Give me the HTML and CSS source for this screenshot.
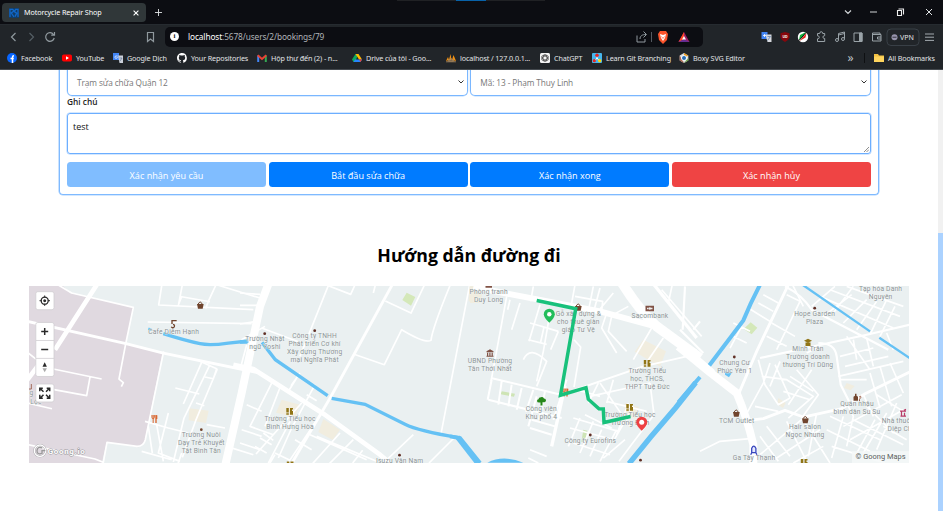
FILE: index.html
```html
<!DOCTYPE html>
<html lang="vi">
<head>
<meta charset="utf-8">
<title>Motorcycle Repair Shop</title>
<link rel="stylesheet" href="styles.css">
</head>
<body>
<header class="browser">
  <div class="tabstrip">
    <div class="tab">
      <svg class="tab-icon" viewBox="0 0 30 30"><path d="M0 0h30v30H0z" fill="#123d68"/><path d="M3 2v25M3 4h8l4 5-8 6 8 12M27 2v25M27 4h-7l-4 7 7 5-5 10" fill="none" stroke="#1267c8" stroke-width="4"/></svg>
      <span class="tab-title">Motorcycle Repair Shop</span>
      <svg class="tab-close" viewBox="0 0 10 10"><path d="M1 1l8 8M9 1L1 9" stroke="#fff" stroke-width="1.8"/></svg>
    </div>
    <svg class="new-tab" viewBox="0 0 10 10"><path d="M5 0v10M0 5h10" stroke="#dfe2e4" stroke-width="1.3"/></svg>
    <div class="top-handle"><i></i></div>
    <svg class="window-controls" viewBox="0 0 90 12"><path d="M1 4.500l3 3 3-3M26 6h7" fill="none" stroke="#cfd3d6" stroke-width="1.2"/><path d="M53.500 4.500h4v5h-4zM54.500 3h5v5.500" fill="none" stroke="#eee" stroke-width="1.1"/><path d="M82 3l6 6M88 3l-6 6" stroke="#dfe2e4"/></svg>
  </div>
  <div class="toolbar">
    <svg class="nav-icons" viewBox="0 0 160 24"><g fill="none" stroke="#90999e" stroke-width="1.2"><path d="M15.500 8l-4 4 4 4"/><path d="M29.500 8l4 4-4 4" stroke="#555f65"/><path d="M53.500 9.500a4.300 4.300 0 1 0 .7 3.500M54.500 7v3.200h-3.300"/><path d="M147.500 7.500h6v9l-3-2.500-3 2.500z"/></g></svg>
    <div class="address">
      <span class="site-info">i</span>
      <span class="url"><b>localhost</b>:5678/users/2/bookings/79</span>
      <svg class="address-icons" viewBox="0 0 56 16"><path d="M-2 6.500v6.500h8v-3M1 10c0-3 2-4.500 6-4.500M4.500 2.500l3 3-3 3" fill="none" stroke="#90999e"/><path d="M12.500 3v10" stroke="#535960"/><g transform="translate(-4)"><path d="M25 2h6l2 3-1 6-4 4-4-4-1-6z" fill="#fb542b"/><path d="M25 5l3 1 3-1-1 4-2 3-2-3z" fill="#fff"/><path d="M26.500 7.500l1.500 2 1.500-2" stroke="#fb542b" fill="none" stroke-width=".7"/><path d="M49 3l-5.500 10h11z" fill="#9e1f63"/><path d="M49 3l-5.500 10 5.500-3z" fill="#ff4724"/><path d="M43.500 13h11L49 10z" fill="#662d91"/><path d="M49 7l-2 3.600h4z" fill="#fff"/></g></svg>
    </div>
    <svg class="extensions" viewBox="760 0 183 24">
      <path d="M761.500 7h6v7h-6z" fill="#4285f4"/><path d="M765.500 9.500h6v7.500h-4z" fill="#d7d9de"/><path d="M763 10.500h3M764.500 9v3" stroke="#fff" stroke-width=".8"/><path d="M767.500 11.500h3l-3 4" stroke="#5578a9" stroke-width=".7" fill="none"/>
      <path d="M785 7l4.500 1.200v4.300q-1 3-4.500 4.500-3.500-1.500-4.500-4.500V8.200z" fill="#86070c"/><text class="ublock" x="785" y="13.200">UD</text>
      <circle cx="803" cy="12" r="5.200" fill="#fff"/><path d="M799 15l1-5 6-3-3 5z" fill="#11b53b"/><path d="M799.500 16l7-8-1 4.500z" fill="#e62117"/><path d="M799 15.500l7-8" stroke="#111"/>
      <g fill="none" stroke="#9aa3a8"><path d="M817.500 8.500h2.200q0-1.800 1.500-1.800t1.500 1.800h2v2.200q-1.800 0-1.800 1.400t1.800 1.400v3h-7.200v-2.700q1.800 0 1.800-1.500t-1.800-1.500z"/><path d="M838.500 15V8.500l6-1.500v6.800M838.500 10l6-1.500"/><circle cx="837" cy="15" r="1.500"/><circle cx="843" cy="14" r="1.500"/><path d="M854 8h8v8.500h-8z"/><path d="M859.500 8h2.500v8.500h-2.500z" fill="#9aa3a8"/><path d="M880 9.500V8h-7.500v8h8.500V9.500h-8.500M881 12h-3.500v2h3.500"/><rect x="887" y="4" width="32" height="16.500" rx="4" stroke="#394047"/><path d="M925 9h9M925 12.200h9M925 15.400h9" stroke="#a4abb0"/></g>
      <circle cx="894.500" cy="12.200" r="3" fill="#9895ad"/><path d="M892.500 12.200h4" stroke="#32313d"/><text class="vpn" x="900" y="15" textLength="14" lengthAdjust="spacingAndGlyphs">VPN</text>
    </svg>
  </div>
  <nav class="bookmarks">
    <a class="bm w-facebook"><svg viewBox="0 0 10 10"><circle cx="5" cy="5" r="5" fill="#0866ff"/><path d="M5.500 10V4q0-1.300 1.500-1.300M3.500 5.500h3.300" stroke="#fff" stroke-width="1.500" fill="none"/></svg><span>Facebook</span></a>
    <a class="bm w-youtube"><svg viewBox="0 0 10 10"><rect y="1.500" width="10" height="7" rx="1.700" fill="#f00"/><path d="M4 3.300v3.400L7 5z" fill="#fff"/></svg><span>YouTube</span></a>
    <a class="bm w-dich"><svg viewBox="0 0 10 10"><path d="M0 0h6v7H0z" fill="#4285f4"/><path d="M5 2.500h5V10H6.500z" fill="#cbd0da"/><path d="M4.700 3H3a1.200 1.200 0 1 0 1.300 1" stroke="#fff" stroke-width=".7" fill="none"/><path d="M6.500 5h2.500l-2 3" stroke="#637795" stroke-width=".7" fill="none"/></svg><span>Google Dịch</span></a>
    <a class="bm w-repos"><svg viewBox="0 0 16 16"><path fill="#fff" d="M8 0C3.600 0 0 3.600 0 8c0 3.500 2.300 6.500 5.500 7.600.4.100.5-.2.500-.4v-1.400c-2.200.500-2.700-1-2.700-1-.4-.9-.9-1.200-.9-1.200-.7-.5.100-.5.100-.5.800.1 1.200.8 1.200.8.700 1.200 1.900.9 2.300.7.100-.5.300-.9.500-1.100-1.800-.2-3.600-.9-3.600-4 0-.9.300-1.600.8-2.100-.1-.2-.4-1 .1-2.100 0 0 .7-.2 2.200.8a7.500 7.500 0 0 1 4 0c1.500-1 2.200-.8 2.200-.8.400 1.100.2 1.900.1 2.100.5.600.8 1.300.8 2.100 0 3.100-1.900 3.700-3.700 3.900.3.300.6.800.6 1.500v2.200c0 .2.100.5.500.4A8 8 0 0 0 8 0z"/></svg><span>Your Repositories</span></a>
    <a class="bm w-mail"><svg viewBox="0 0 10 10"><path d="M1.200 9V2.500" stroke="#4285f4" stroke-width="2"/><path d="M8.800 9V2.500" stroke="#34a853" stroke-width="2"/><path d="M.7 2.300L5 6l4.300-3.700" fill="none" stroke="#ea4335" stroke-width="2"/></svg><span>Hộp thư đến (2) - n...</span></a>
    <a class="bm w-drive"><svg viewBox="0 0 10 10"><path d="M3.500 1h3L3 9H1.500L0 6.500z" fill="#0da960"/><path d="M3.500 1h3L10 6.500H7z" fill="#ffba00"/><path d="M3 6.500h7L8.500 9h-7z" fill="#2684fc"/><path d="M7 6.500h3L8.500 9z" fill="#ea4335"/></svg><span>Drive của tôi - Goo...</span></a>
    <a class="bm w-local"><svg viewBox="0 0 10 10"><path d="M0 8l2-4 1 3zM3 7l1.500-6 1 6zM6 7l1.500-5L10 8z" fill="#f29111"/><path d="M0 8.800h10M2 9l1-3 1 3 1-4 1 4 1-3 1 3" stroke="#a8885d" fill="none" stroke-width=".8"/></svg><span>localhost / 127.0.0.1...</span></a>
    <a class="bm w-gpt"><svg viewBox="0 0 10 10"><rect width="10" height="10" rx="1.500" fill="#f4f4f4"/><g fill="none" stroke="#333" stroke-width=".6"><ellipse cx="5" cy="5" rx="2" ry="3.700"/><ellipse cx="5" cy="5" rx="2" ry="3.700" transform="rotate(60 5 5)"/><ellipse cx="5" cy="5" rx="2" ry="3.700" transform="rotate(120 5 5)"/></g></svg><span>ChatGPT</span></a>
    <a class="bm w-git"><svg viewBox="0 0 10 10"><rect width="10" height="10" rx="1" fill="#46b5ec"/><path d="M5 2v3L2.500 8M5 5l2.500 3" stroke="#fff" fill="none"/><circle cx="5" cy="2.200" r="1.700" fill="#e62222"/><circle cx="2.300" cy="7.700" r="1.600" fill="#e62222"/><circle cx="7.700" cy="7.700" r="1.600" fill="#ffd500"/></svg><span>Learn Git Branching</span></a>
    <a class="bm w-boxy"><svg viewBox="0 0 10 10"><path d="M5 0l4.300 2.500v5L5 10 .7 7.500v-5z" fill="#d8dce0"/><path d="M5 0l4.300 2.500L5 5z" fill="#e89b20"/><path d="M5 10l4.300-2.500V5z" fill="#6ca344"/><path d="M.7 2.500v5L5 10z" fill="#ad6750"/><circle cx="5" cy="5" r="2.800" fill="#fff"/><circle cx="5" cy="5" r="2" fill="#246cb4"/></svg><span>Boxy SVG Editor</span></a>
    <span class="more">»</span>
    <a class="bm all"><svg viewBox="0 0 10 10"><path d="M0 1h4l1 1.500h5V9H0z" fill="#f2c143"/><path d="M0 3.500h10V9H0z" fill="#ffd55e"/></svg><span>All Bookmarks</span></a>
  </nav>
</header>

<div class="viewport">
  <main class="page">
    <form class="card">
      <div class="row two">
        <div class="select"><span>Trạm sửa chữa Quận 12</span><svg viewBox="0 0 6 4"><path d="M.5.500L3 3 5.500.500"/></svg></div>
        <div class="select"><span>Mã: 13 - Phạm Thuy Linh</span><svg viewBox="0 0 6 4"><path d="M.5.500L3 3 5.500.500"/></svg></div>
      </div>
      <label class="label">Ghi chú</label>
      <div class="note"><span>test</span><svg viewBox="0 0 6 6"><path d="M0 6l6-6M3 6l3-3"/></svg></div>
      <div class="row four">
        <button type="button" class="btn muted">Xác nhận yêu cầu</button>
        <button type="button" class="btn">Bắt đầu sửa chữa</button>
        <button type="button" class="btn">Xác nhận xong</button>
        <button type="button" class="btn danger">Xác nhận hủy</button>
      </div>
    </form>
    <h1 class="title">Hướng dẫn đường đi</h1>
    <svg class="map" viewBox="29 286.300 880 176.400" preserveAspectRatio="none">
      <rect x="29" y="286" width="880" height="178" fill="#eaf0f1"/>

      <!-- west -->
      <g transform="translate(20 280) scale(.33333)">
        <path d="M0 0H110L150 40 340 82 318 190 427 220 373 490 355 503 260 488 243 560H0z" fill="#e0d9e0"/>
        <path d="M508 386l58 7-8 37-52-8z" fill="#f1eddf"/>
        <g class="road">
          <path class="w4" d="M105 10l50 30 185 43-23 110-20 105 13 11-6 12M0 490l225 48 25 10 11-60 90 12q20 0 25-20l55-265"/>
          <path class="w8" d="M0 120l318 72 112 28 290 60"/>
          <path class="w12" d="M240 0L105 210M60 250L0 330"/>
          <path class="w4" d="M100 268l145 30M102 330l98 18 10-56M0 365l96 22M0 200l50 40"/>
          <path class="w20" d="M750 0l-30 80-55 260-50 220"/>
          <path class="w4" d="M428 0l-12 76 284 14M490 0l-15 78M595 0l-30 65-8 22M383 127l312 5M475 76l10-25 85 15M590 15l80 25 50 15M680 195l-20 75M735 140l-70 40"/>
          <path class="w4" d="M545 248l-55 125M570 255l-78 160-32 132M592 268l-65 155-40 110M540 245l50 22-10 30-25-5M466 325l72 18M528 370l25 8M375 425l70 20 60 15M385 440l12 80M410 435l20 110M445 400l-30 120 65 25M365 515l90 25M560 435l55 10M680 375l45 20M665 450l60 20M660 490l60 20M620 500l80 25M485 520l-12 35"/>
        </g>
        <path class="water w10" d="M430 162Q500 184 540 192 570 198 625 190L685 184"/><path class="water" d="M385 147l10 4" stroke-width="7"/>
      </g>

      <!-- centre west -->
      <g transform="translate(240 280) scale(.33333)">
        <path d="M500 39l26 13-13 26-26-17z" fill="#d4e8b9"/><path d="M125 360l55 15-15 38-57-14zM250 418l50 32-22 31-43-24zM690 20h35v50h-35z" fill="#f1eddf"/>
        <g class="road">
          <path class="w14" d="M-20 255L40 268 250 402 420 525 450 550"/>
          <path class="w8" d="M465 0L272 352 150 560"/>
          <path class="w4" d="M268 10L180 230M265 18l67 26 20-44M410 0l-10 40M436 64l77 36 48-100M340 223l93 32 52-105q70 42 88 32 4-36 60-172M690 10L602 468M642 475l-75 75M520 465l-90 85M65 145l120 45M0 77h60M0 133l45-7M0 40l60 4M95 310L30 440l70 25M122 318L75 440M170 295l-28 45M180 280l-27 38M225 315l-70 130-40 90M200 345l30 18M185 370L48 523M245 400l-100 148M150 425l-65 125M230 470l180 75M210 465l170 75M300 460L215 555M340 480L265 555M368 512l-30 38M70 460l30 22M60 475l35 20M45 500l35 20M165 480l50 30M105 520l45 22M90 550l15-25"/>
        </g>
        <path class="water w10" d="M0 187H22M66 188l40 52 157 108M275 356l100 18 120 60q40 20 160 40"/><path class="water" d="M652 472l60 77" stroke-width="15"/>
      </g>

      <!-- centre east -->
      <g transform="translate(450 280) scale(.33333)">
        <path d="M58 20l20 3-7 45-15-3zM580 180l68 35-18 46-76-45zM525 370l42 12-10 35-36-10z" fill="#f1eddf"/><path d="M155 335l40 7-3 9-40-7zM400 450l12 3-8 35-10-2z" fill="#cee4b5"/>
        <g class="road">
          <path class="w18" d="M70 22L450 95 605 137"/>
          <path class="w28" d="M510 0Q565 90 620 140L750 235"/>
          <path class="w10" d="M600 0L740 175M345 318L305 500"/>
          <path class="w4" d="M170 50L123 305M180 60l-7 30M210 70l-25 80M250 20l-8 45M270 75l-33 110M240 130l42 12-10 45M275 140l50 15M325 155l-23 55M235 180l55 14M300 100l-20 115-20 90M365 70l10-55M430 20l-15 75M450 25l-20 75M375 50l83 15-3 30M372 180l20 22-20 120M470 100l-15 45 45 75M485 110l-10 45 55 60M490 40l-40 48M535 80l-55 30M605 145L550 240M640 175l-55 80"/>
          <path class="w5" d="M123 295l210 50L580 260l130-30 30-20M115 360l220 55M125 300l-12 60M155 305l-10 70M185 315l-10 65M215 325l-15 65M250 330l-22 66M285 335l-18 85M245 420l70 20M240 445l65 20M260 350l-25 90M350 300l-40 120"/>
          <path class="w4" d="M445 310l-30 60M450 310l90 130M490 300l-20 70M420 350l180-40M600 310l12 95-105 140M380 330l70 20M405 405l80 40M370 415l135 40M360 445l120 32M370 490l110 35M390 415l-35 85M430 425l-40 95M455 450l-35 80M500 450l-50 95M525 480l-65 55M535 370l-35 95M550 380l-60 105M470 365l120 30M220 240q20-45 70 5l-30 75M240 510l50 20M235 535l30 15M635 30l120 140M670 0l-15 70"/>
        </g>
        <path class="water" d="M537 552l65-80 75-88 60-75" stroke-width="16"/><path class="water" d="M0 470l30 5 60 75" stroke-width="12"/><path d="M112 549q48-25 108 0z" fill="#65c1f4"/>
      </g>

      <!-- east -->
      <g transform="translate(680 280) scale(.33333)">
        <path d="M212 128l20 16-17 20-24-16z" fill="#d4e8b9"/><path d="M500 310l24 9-12 13-20-7zM295 355l22 15-8 15-18-12z" fill="#f1eddf"/><path d="M135 275l20 5-8 13-12-8z" fill="#65c1f4"/>
        <g class="road">
          <path class="w20" d="M-5 200L90 278 170 340Q200 410 220 495V555"/>
          <path class="w8" d="M325 15L230 215 175 345M205 422l45-5 65-25 55 20 115-25 70-45 140-68"/>
          <path class="w6" d="M240 235l320-70 130-30M415 190q50 0 55 40l12 85 25 50M15 20L8 150M0 150l70 70M40 150l20-25M315 20q50 25 80 70l230 120"/>
          <path class="w4" d="M60 515l60-30 90-8M205 85l65 40M160 130l50 25M150 165l50 25M185 140l-35 65M235 70l45 25M250 45l45 25M320 45l40 20-70 145M275 130l70 40M260 170l60 30M235 240l20 75 40 60 35-20-45-100M245 290l75 10 80 50-75 65M270 250l-20 60M300 245l-30 75M225 380l70 15M250 310l-60 110M330 290l70 45M350 270l65 75-50 70M395 270l-70 105M310 335l80 25M370 80L330 0M460 100l60-80M395 80l70-60M430 110l85-65M490 130l70-70M530 150l60-85M570 165l50-105M600 170l45-90M420 50l220 95M450 30l210 80M500 20l170 60M520 180l10 60M560 175l20 85M620 160l20 50M480 230l100-25M495 260l130-30M475 290l195-45M570 280l30 105M600 260l35 120M630 250l40 90M500 370l20 40-20 90M550 345l30 65M490 440l175-95M510 480l160-90M450 410l150 70M440 450l130 65M370 415l-130 110M320 425l60 120M375 430l75 120M420 450l-130 85M260 440l70 90M240 470l55 75M430 500l-90 50M490 410l-35 125M585 420l-60 110M620 400l-70 120M650 370l-60 140M455 500l160 50M480 300l80 0M500 170l70 100M380 220l40-20M590 345l80 50M560 380l80 80M610 440l70 40M520 420l150 75M410 400l-25 130"/>
        </g>
        <path class="water" d="M-5 368L60 292M82 265L190 122 212 72 240 15" stroke-width="12"/><path class="water" d="M360 10l210 145M598 174l92 62" stroke-width="7"/>
        <path class="road w20" d="M45 236l52 45"/>
      </g>

      <g transform="translate(20 280) scale(.33333)" class="labels"><text x="461" y="162">Cafe Diễm Hạnh</text><text x="45" y="346">g N</text><text x="48" y="372">Lộc</text><text x="544" y="473">Trường Nuôi<tspan x="544" dy="24">Dạy Trẻ Khuyết</tspan><tspan x="544" dy="24">Tật Bình Tân</tspan></text><text class="logo" x="139" y="522" textLength="112">Goong.io</text><circle cx="60" cy="513" r="17" fill="none" stroke="#9b9a9e" stroke-width="6"/><circle cx="60" cy="513" r="17" fill="none" stroke="#fff" stroke-width="4"/><path d="M67 505q-14-7-16 8 0 13 15 8v-8h10" fill="none" stroke="#999" stroke-width="4"/></g>
      <g transform="translate(240 280) scale(.33333)" class="labels"><text x="75" y="185">Trường Nhật<tspan x="75" dy="24">ngữ Yoshi</tspan></text><text x="224" y="175">Công ty TNHH<tspan x="224" dy="24">Phát triển Cơ khí</tspan><tspan x="224" dy="24">Xây dựng Thương</tspan><tspan x="224" dy="24">mại Nghĩa Phát</tspan></text><text x="150" y="424">Trường Tiểu học<tspan x="150" dy="24">Bình Hưng Hòa</tspan></text><text x="479" y="550">Isuzu Vân Nam</text></g>
      <g transform="translate(450 280) scale(.33333)" class="labels"><text x="116" y="43">Phòng tranh<tspan x="116" dy="24">Duy Long</tspan></text><text x="120" y="249">UBND Phường<tspan x="120" dy="24">Tân Thới Nhất</tspan></text><text x="385" y="110">Gỗ xây dựng &amp;<tspan x="385" dy="24">cho thuê giàn</tspan><tspan x="385" dy="24">giáo Tư Vệ</tspan></text><text x="600" y="115">Sacombank</text><text x="592" y="280">Trường Tiểu<tspan x="592" dy="24">học, THCS,</tspan><tspan x="592" dy="24">THPT Tuệ Đức</tspan></text><text x="274" y="394">Công viên<tspan x="274" dy="24">Khu phố 4</tspan></text><text x="540" y="411">Trường Tiểu học<tspan x="540" dy="24">Trương Định</tspan></text><text x="421" y="489">Công ty Eurofins</text></g>
      <g transform="translate(680 280) scale(.33333)" class="labels"><text x="602" y="35">Tạp hóa Danh<tspan x="602" dy="24">Nguyên</tspan></text><text x="404" y="109">Hope Garden<tspan x="404" dy="24">Plaza</tspan></text><text x="384" y="215">Minh Trân<tspan x="384" dy="24">Trường doanh</tspan><tspan x="384" dy="24">thương Trí Dũng</tspan></text><text x="164" y="256">Chung Cư<tspan x="164" dy="24">Phúc Yên 1</tspan></text><text x="170" y="429">TCM Outlet</text><text x="375" y="448">Hair salon<tspan x="375" dy="24">Ngọc Nhung</tspan></text><text x="531" y="380">Quán nhậu<tspan x="531" dy="24">bình dân Su Su</tspan></text><text x="654" y="429">Nhà thuốc<tspan x="662" dy="24">Diệp Chi</tspan></text><text x="222" y="542">Ga Tây Thạnh</text></g>

      <!-- points of interest -->
      <g transform="translate(20 280) scale(.33333)">
        <g id="basket"><path d="M531 73h20l-3 14h-14z" fill="#70442d"/><path d="M534 74q7-14 13 0" fill="none" stroke="#70442d" stroke-width="3"/></g>
        <path d="M470 123h-14v10M459 134a5 5 0 1 1-5 7" fill="none" stroke="#70442d" stroke-width="4"/><path d="M34 313v15h-7" fill="none" stroke="#a46a59" stroke-width="3"/>
        <g id="food" fill="none" stroke="#d9662f"><path d="M396 406v7q0 4 3.500 4t3.500-4v-7M399.500 406v24" stroke-width="3"/><path d="M408 406v24M410 407v11" stroke-width="4"/></g>
        <circle cx="544" cy="450" r="4" fill="#70442d"/>
      </g>
      <g fill="#602f25"><circle cx="264.700" cy="334" r="1.400"/><circle cx="314.700" cy="331" r="1.400"/><circle cx="399.500" cy="455.500" r="1.400"/><circle cx="590.300" cy="435.300" r="1.400"/><circle cx="640.500" cy="460.500" r="1.400"/><circle cx="814.700" cy="308.500" r="1.400"/><circle cx="734.300" cy="357.300" r="1.400"/></g>
      <g id="school" fill="#917516"><path d="M286.300 408.300h2.500v4.500h-2.500zM286.300 413.500h2.500v1.500h-2.500zM290 408.300h3v1.500h-1v1.500h1v3.700h-3z"/></g>
      <use href="#school" x="357.500" y="-48"/><use href="#school" x="340" y="-4"/><use href="#school" x="0.500" y="53.500"/><use href="#school" x="514.500" y="51"/>
      <use href="#basket" transform="translate(398 282) scale(.33333)"/><use href="#basket" transform="translate(556 388) scale(.33333)"/><use href="#basket" transform="translate(625 394.500) scale(.33333)"/><use href="#food" transform="translate(431 253.500) scale(.33333)"/>
      <g fill="#815346"><path d="M486.500 351.500l3.500-2 3.500 2v1h-7zM487 353h1.200v3H487zM489.300 353h1.200v3h-1.200zM491.600 353h1.200v3h-1.200zM486.500 356h7v1h-7zM485.500 286h6.500v2h-6.500zM645.500 306h8.500v5.500h-8.500z"/></g><path d="M647 308.800h1.500m2.500 0h1.500" stroke="#eee" stroke-width="1.500"/><circle cx="649.800" cy="308.800" r="1.300" fill="#eee"/>
      <path d="M540.500 405.800v-3q-3.500.5-3.500-1.500 0-1.500 1.500-1.800 0-2 2.500-2 2-.5 3 1.300 2 .2 2 2 0 2-3.500 1.800v3.200z" fill="#26871a"/>
      <path d="M804 341l4-2 4 2-4 2zM805.500 342.700v3.500h5v-3.500" fill="#917516"/>
      <path d="M855 394h1.500v2l1.500 1v4h-4.500v-4l1.500-1z" fill="#70442d"/><path d="M859 397.500q2-2 2 0l-1.500 2v2" stroke="#9d634d" fill="none"/>
      <path d="M900 411.500h6M900.500 416.500h5.500M901.500 412v4M904.500 413v3M904 410.500l2-.8" fill="none" stroke="#b93d68" stroke-width="1.200"/>
      <path d="M751.700 453v-4.500q2-4 4.200 0v4.500zM751.700 453l-1 2m5.200-2l1 2" fill="#e5e9ff" stroke="#3947bd" stroke-width="1.300"/>

      <path d="M536.700 300.800l39 8.200-15.200 86.500 25.500-7.500 2.300 11.500 10.700 9.500 4.300.3.700 13.500 26.500-6" fill="none" stroke="#18c17b" stroke-width="3.500"/>
      <path d="M549.300 323q-5.500-5-5.500-8.500a5.500 5.500 0 0 1 11 0q0 3.500-5.500 8.500z" fill="#22bd5b"/><circle cx="549.300" cy="314.500" r="2.200" fill="#fff"/>
      <path d="M641.700 431q-5.500-5-5.500-8.500a5.500 5.500 0 0 1 11 0q0 3.500-5.500 8.500z" fill="#ee4042"/><circle cx="641.700" cy="422.500" r="2.500" fill="#fff"/>

      <g fill="#fff" stroke="#d0ced2" stroke-width=".8"><rect x="35.800" y="292" width="18.200" height="18" rx="2"/><rect x="35.800" y="322.800" width="18.200" height="54" rx="2"/><rect x="35.800" y="384.300" width="18.200" height="18" rx="2"/><path d="M36 340.800h18M36 358.700h18"/></g>
      <g fill="none" stroke="#292929"><circle cx="44.700" cy="301" r="3.500" stroke-width="1.300"/><path d="M44.700 295.800v2M44.700 304.200v2M39.500 301h2M48 301h2"/><circle cx="44.700" cy="301" r="1.500" fill="#292929" stroke="none"/><path d="M44.700 328.300v7M41.200 331.800h7M41.200 349.700h7" stroke-width="1.500"/><path d="M39.800 391.500v-3h3M46.700 388.500h3v3M39.800 395v3.500h3M46.700 398.500h3V395M40 388.500l3.500 3.500M49.500 388.500L46 392M40 398.500l3.500-3.500M49.500 398.500L46 395" stroke-width="1.500"/></g><path d="M42.500 367l2.200-4.500 2.200 4.500z" fill="#292929"/><path d="M42.500 368.500l2.200 4 2.200-4z" fill="#aaa"/>
      <rect x="852" y="451.500" width="57" height="12" fill="#f5f8f8" opacity=".85"/><text class="credit" x="855.500" y="459.700" textLength="50" lengthAdjust="spacingAndGlyphs">© Goong Maps</text>
    </svg>
  </main>
  <div class="scrollbar"><i></i></div>
</div>
</body>
</html>
```

FILE: styles.css
```css
* { box-sizing: border-box; }
body { margin: 0; height: 511px; overflow: hidden; display: flex; flex-direction: column; background: #fff; font-family: "Open Sans", "Noto Sans", sans-serif; }
svg { display: block; flex: none; }

.browser { height: 70px; flex: none; background: #212529; border-bottom: 1px solid #44494e; color: #e2e4e6; font-family: "Noto Sans", sans-serif; }
.tabstrip { height: 25px; background: #0c0d12; border-bottom: 1px solid #262b30; display: flex; align-items: flex-start; }
.tab { width: 144px; height: 19px; margin: 3px 0 0 2px; border-radius: 4px; background: #303739; display: flex; align-items: center; padding: 0 7px; }
.tab-icon { width: 10px; height: 10px; }
.tab-title { margin-left: 5px; width: 104px; font-size: 7.2px; line-height: 10px; margin-top: -1px; letter-spacing: -0.1px; color: #fff; white-space: nowrap; }
.tab-close { width: 6px; height: 6px; margin-left: 6px; }
.new-tab { width: 7px; height: 7px; margin: 9px 0 0 9px; }
.top-handle { width: 148px; height: 1px; margin-left: 235px; background: #202124; display: flex; justify-content: center; }
.top-handle i { width: 30px; background: #0862a8; }
.window-controls { width: 90px; height: 12px; margin: 6px 9px 0 auto; }

.toolbar { height: 23px; display: flex; align-items: center; }
.nav-icons { width: 160px; height: 24px; }
.address { width: 538px; height: 20px; margin-left: 5px; padding: 0 8px 0 5px; border-radius: 5px; background: #0c0d12; display: flex; align-items: center; }
.site-info { width: 9px; height: 9px; border-radius: 50%; background: #fff; color: #111; font: bold 7px/9px "Liberation Serif", serif; text-align: center; }
.url { margin-left: 9px; font-size: 8.300px; letter-spacing: -0.11px; color: #b0b4b8; white-space: nowrap; }
.url b { font-weight: 400; color: #fff; }
.address-icons { width: 56px; height: 16px; margin-left: auto; overflow: visible; }
.extensions { width: 183px; height: 24px; margin-left: auto; }
.ublock { font-size: 3.5px; font-weight: 700; fill: #fff; text-anchor: middle; }
.vpn { font-size: 7.5px; fill: #e2e4e6; }

.bookmarks { height: 20px; display: flex; align-items: center; padding-left: 7px; }
.bm { display: flex; align-items: center; gap: 4px; flex: none; font-size: 7.2px; line-height: 10px; letter-spacing: -0.12px; white-space: nowrap; }
.bm svg { width: 10px; height: 10px; }
.w-facebook { width: 55px; }
.w-youtube { width: 51px; }
.w-dich { width: 64px; }
.w-repos { width: 80px; }
.w-mail { width: 95px; }
.w-drive { width: 94px; }
.w-local { width: 94px; }
.w-gpt { width: 52px; }
.w-git { width: 87px; }
.w-boxy { width: 100px; }
.more { flex: 1; font-size: 12px; line-height: 10px; color: #bcc1c5; text-align: center; padding-left: 58px; }
.all { width: 79px; border-left: 1px solid #0e1012; padding-left: 9px; }

.viewport { flex: 1; min-height: 0; display: flex; }
.page { flex: 1; padding: 0 29px; }
.scrollbar { width: 5px; background: #f1f1f1; display: flex; align-items: flex-end; }
.scrollbar i { width: 5px; height: 278px; background: #abd2ff; }

.card { height: 125px; margin: 0 30px; padding: 0 7px; border: solid #7fbaff; border-width: 0 1px 1px; box-shadow: 0 0 0 .6px #a9d1ff; border-radius: 0 0 4px 4px; clip-path: inset(0 -2px -2px); }
.row { display: grid; column-gap: 2.700px; }
.two { grid-template-columns: 1fr 1fr; }
.four { grid-template-columns: repeat(4, 1fr); }
.select { height: 26px; border: 1px solid #7ab7ff; border-top: 0; box-shadow: 0 0 0 .4px #b8d9ff; border-radius: 0 0 5px 5px; padding: 0 3px 1px 9px; display: flex; align-items: center; justify-content: space-between; font-size: 8.300px; letter-spacing: -.1px; color: #777; clip-path: inset(0 -1px -1px); }
.select svg { width: 6px; height: 4px; fill: none; stroke: #333; }
.label { display: block; height: 17px; line-height: 12px; font-size: 8.300px; font-weight: 600; color: #222; }
.note { height: 41px; border: 1px solid #6caeff; box-shadow: 0 0 0 .5px #a9d1ff; border-radius: 3px; display: flex; justify-content: space-between; padding: 6px 1px 1px 5px; font-size: 9px; line-height: 13px; color: #111; }
.note svg { width: 5px; height: 5px; align-self: flex-end; stroke: #555; stroke-width: .8; }
.four { margin-top: 8px; }
.btn { height: 25px; padding: 1px 0 0; border: 0; border-radius: 3.500px; background: #007bff; color: #fff; font: 9.100px "Open Sans", sans-serif; }
.muted { background: #80bdff; }
.danger { background: #ef4444; }

.title { margin: 48px 0 0; height: 43.300px; line-height: 25px; text-align: center; font-size: 17.700px; font-weight: 700; color: #000; }
.map { width: 880px; height: 176.400px; font-family: Roboto, sans-serif; }
.road { fill: none; stroke: #fff; stroke-linejoin: round; }
.w4 { stroke-width: 5; }
.w5 { stroke-width: 6; }
.w6 { stroke-width: 6.500; }
.w8 { stroke-width: 8.500; }
.w10 { stroke-width: 10; }
.w12 { stroke-width: 14; }
.w14 { stroke-width: 14; }
.w18 { stroke-width: 18; }
.w20 { stroke-width: 24; }
.w28 { stroke-width: 30; }
.water { fill: none; stroke: #65c1f4; }
.labels text { font-size: 20px; letter-spacing: .6px; fill: #8b9395; text-anchor: middle; stroke: #f4f7f7; stroke-width: 2px; paint-order: stroke; }
.labels .logo { font-size: 24px; font-weight: 700; fill: #fff; stroke: #9b9a9e; stroke-width: 3px; }
.credit { font-size: 8px; fill: #5a5e60; }
```
